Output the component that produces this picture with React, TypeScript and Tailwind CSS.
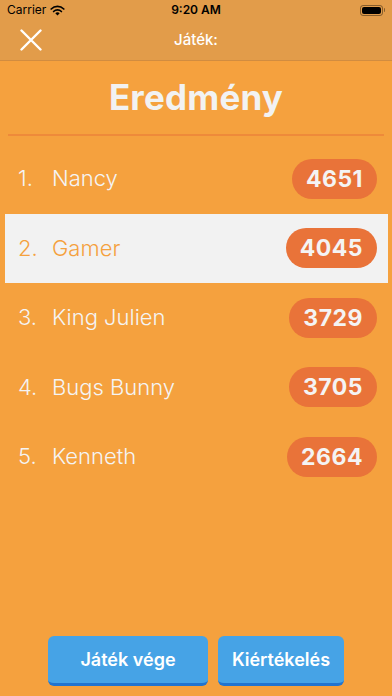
import React from 'react';

const players = [
  { rank: 1, name: 'Nancy', score: 4651 },
  { rank: 2, name: 'Gamer', score: 4045, me: true },
  { rank: 3, name: 'King Julien', score: 3729 },
  { rank: 4, name: 'Bugs Bunny', score: 3705 },
  { rank: 5, name: 'Kenneth', score: 2664 },
];

function StatusBar() {
  return (
    <div className="h-[20px] flex items-center justify-between px-[7px] text-[12px] text-black">
      <div className="flex items-center gap-[4px] w-[100px]">
        <span>Carrier</span>
        <svg width="15" height="11" viewBox="0 0 15 11">
          <path d="M7.5 10.5 L5.3 8.2 A3.2 3.2 0 0 1 9.7 8.2 Z" fill="black" />
          <path d="M3.6 6.5 A5.6 5.6 0 0 1 11.4 6.5" stroke="black" strokeWidth="1.7" fill="none" strokeLinecap="round" />
          <path d="M1.2 4 A9 9 0 0 1 13.8 4" stroke="black" strokeWidth="1.7" fill="none" strokeLinecap="round" />
        </svg>
      </div>
      <span className="font-semibold">9:20 AM</span>
      <div className="w-[100px] flex justify-end items-center">
        <div className="w-[23px] h-[11px] rounded-[3px] border border-black/40 p-[1px]">
          <div className="w-full h-full rounded-[2px] bg-black" />
        </div>
        <div className="w-[1.5px] h-[4px] bg-black/40 rounded-r-sm ml-[1px]" />
      </div>
    </div>
  );
}

export default function App() {
  return (
    <div className="min-h-[696px] w-full flex flex-col bg-[#f5a13e]" style={{ fontFamily: 'Inter, "Noto Sans", sans-serif' }}>
      <div className="bg-[#e29c4a] border-b border-[#d18c40]">
        <StatusBar />
        <div className="h-[40px] flex items-center relative">
          <svg className="ml-[20px]" width="22" height="22" viewBox="0 0 22 22">
            <path d="M1.5 1.5 L20.5 20.5 M20.5 1.5 L1.5 20.5" stroke="white" strokeWidth="2.4" strokeLinecap="round" />
          </svg>
          <span className="absolute left-1/2 -translate-x-1/2 text-white text-[15px] font-medium">Játék:</span>
        </div>
      </div>

      <div className="h-[73px] flex items-center justify-center">
        <h1 className="text-[#f2f2f2] text-[35px] font-bold tracking-[0.2px]">Eredmény</h1>
      </div>
      <div className="mx-[8px] h-[2px] bg-[#ee8a3a]" />

      <div className="mt-[8px] flex flex-col">
        {players.map((p) => (
          <div
            key={p.rank}
            className={
              'h-[69.5px] mx-[5px] mr-[4px] flex items-center pr-[11px] ' +
              (p.me ? 'bg-[#f2f2f2] text-[#f5a13e]' : 'text-[#f4f4f4]')
            }
          >
            <span className="w-[47px] pl-[13px] text-[22px] font-light">{p.rank}.</span>
            <span className="flex-1 text-[22px] font-light">{p.name}</span>
            <span className="h-[40px] px-[14px] rounded-full bg-[#e97339] text-[#f4f4f4] text-[23px] font-bold flex items-center tracking-[0.5px]">
              {p.score}
            </span>
          </div>
        ))}
      </div>

      <div className="flex-1" />

      <div className="flex justify-center gap-[10px] mb-[10px]">
        <button className="w-[160px] h-[50px] rounded-[6px] bg-[#46a3e6] border-b-[3px] border-[#2274cf] text-white text-[18px] font-semibold">
          Játék vége
        </button>
        <button className="w-[126px] h-[50px] rounded-[6px] bg-[#46a3e6] border-b-[3px] border-[#2274cf] text-white text-[18px] font-semibold">
          Kiértékelés
        </button>
      </div>
    </div>
  );
}
